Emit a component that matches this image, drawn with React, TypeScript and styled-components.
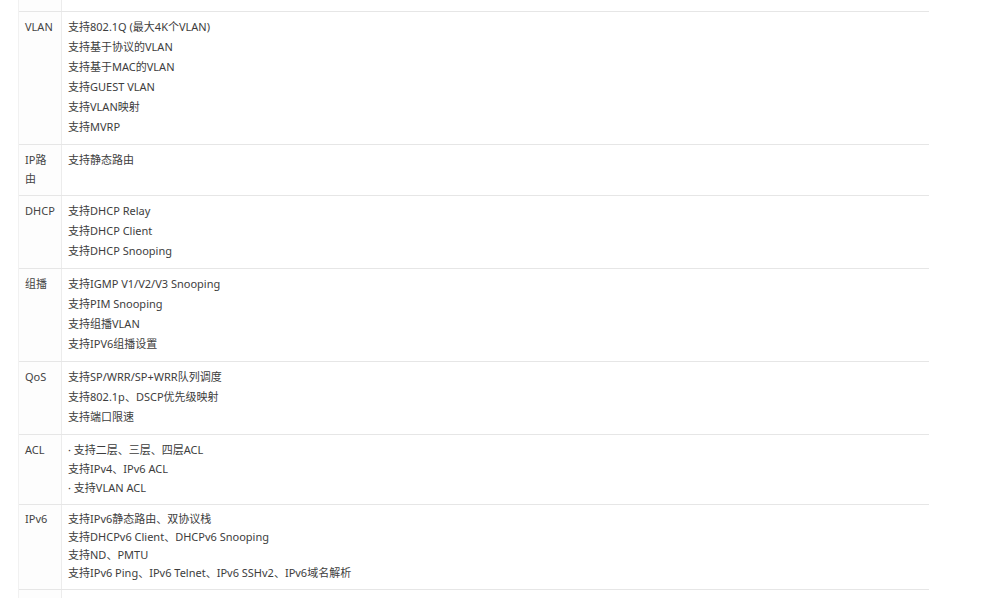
import styled, { createGlobalStyle } from 'styled-components';

const GlobalStyle = createGlobalStyle`
    html, body {
        margin: 0;
        padding: 0;
        background: #ffffff;
    }
    body {
        font-family: "Noto Sans", "Noto Sans CJK SC", sans-serif;
        color: #3d3d3d;
    }
`

type Spec = {
    label: string;
    items: string[];
    lh: number;
};

const specs: Spec[] = [
    {
        label: 'VLAN',
        lh: 20,
        items: [
            '支持802.1Q (最大4K个VLAN)',
            '支持基于协议的VLAN',
            '支持基于MAC的VLAN',
            '支持GUEST VLAN',
            '支持VLAN映射',
            '支持MVRP',
        ],
    },
    { label: 'IP路由', lh: 19, items: ['支持静态路由'] },
    {
        label: 'DHCP',
        lh: 20,
        items: ['支持DHCP Relay', '支持DHCP Client', '支持DHCP Snooping'],
    },
    {
        label: '组播',
        lh: 20,
        items: [
            '支持IGMP V1/V2/V3 Snooping',
            '支持PIM Snooping',
            '支持组播VLAN',
            '支持IPV6组播设置',
        ],
    },
    {
        label: 'QoS',
        lh: 20,
        items: ['支持SP/WRR/SP+WRR队列调度', '支持802.1p、DSCP优先级映射', '支持端口限速'],
    },
    {
        label: 'ACL',
        lh: 19,
        items: ['· 支持二层、三层、四层ACL', '支持IPv4、IPv6 ACL', '· 支持VLAN ACL'],
    },
    {
        label: 'IPv6',
        lh: 18,
        items: [
            '支持IPv6静态路由、双协议栈',
            '支持DHCPv6 Client、DHCPv6 Snooping',
            '支持ND、PMTU',
            '支持IPv6 Ping、IPv6 Telnet、IPv6 SSHv2、IPv6域名解析',
        ],
    },
];

function App() {
    return (
        <Page>
            <GlobalStyle />
            <Table>
                <Stub $h={11}>
                    <LabelCell />
                    <ValueCell />
                </Stub>
                {specs.map((s) => (
                    <Row key={s.label} $lh={s.lh}>
                        <LabelCell>{s.label}</LabelCell>
                        <ValueCell>
                            {s.items.map((it) => (
                                <Line key={it}>{it}</Line>
                            ))}
                        </ValueCell>
                    </Row>
                ))}
                <Stub $h={20}>
                    <LabelCell />
                    <ValueCell />
                </Stub>
            </Table>
        </Page>
    )
}

const Page = styled.div`
    width: 990px;
    height: 598px;
    overflow: hidden;
    padding-left: 18px;
    box-sizing: border-box;
`

const Table = styled.div`
    width: 910px;
    display: flex;
    flex-direction: column;
    border-left: 1px solid #f1f1f1;
    font-size: 11px;
`

const Row = styled.div<{ $lh: number }>`
    display: grid;
    grid-template-columns: 43px 1fr;
    border-top: 1px solid #e6e6e6;
    line-height: ${(p) => p.$lh}px;
`

const Stub = styled.div<{ $h: number }>`
    display: grid;
    grid-template-columns: 43px 1fr;
    height: ${(p) => p.$h}px;
    border-top: 1px solid #e6e6e6;
    &:first-child {
        border-top: none;
    }
`

const LabelCell = styled.div`
    padding: 5px 4px 7px 6px;
    border-right: 1px solid #ececec;
    background: #fdfdfd;
    color: #444;
`

const ValueCell = styled.div`
    padding: 5px 6px 7px 6px;
    display: flex;
    flex-direction: column;
`

const Line = styled.div`
    white-space: nowrap;
`

export default App;
